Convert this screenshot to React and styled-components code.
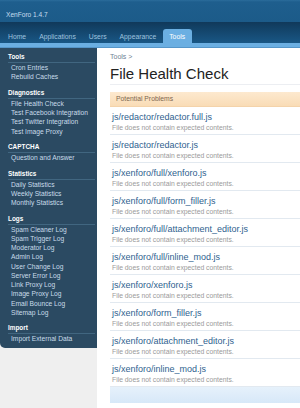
import React from "react";
import styled, { createGlobalStyle } from "styled-components";

const GlobalStyle = createGlobalStyle`
  html, body {
    margin: 0;
    padding: 0;
    background: #efefef;
    font-family: "Liberation Sans", Arial, sans-serif;
  }
  #root {
    min-height: 100vh;
  }
`;

const tabs = ["Home", "Applications", "Users", "Appearance", "Tools"];

const menu = [
  { title: "Tools", items: ["Cron Entries", "Rebuild Caches"] },
  {
    title: "Diagnostics",
    items: [
      "File Health Check",
      "Test Facebook Integration",
      "Test Twitter Integration",
      "Test Image Proxy",
    ],
  },
  { title: "CAPTCHA", items: ["Question and Answer"] },
  {
    title: "Statistics",
    items: ["Daily Statistics", "Weekly Statistics", "Monthly Statistics"],
  },
  {
    title: "Logs",
    items: [
      "Spam Cleaner Log",
      "Spam Trigger Log",
      "Moderator Log",
      "Admin Log",
      "User Change Log",
      "Server Error Log",
      "Link Proxy Log",
      "Image Proxy Log",
      "Email Bounce Log",
      "Sitemap Log",
    ],
  },
  { title: "Import", items: ["Import External Data"] },
];

const problems = [
  "js/redactor/redactor.full.js",
  "js/redactor/redactor.js",
  "js/xenforo/full/xenforo.js",
  "js/xenforo/full/form_filler.js",
  "js/xenforo/full/attachment_editor.js",
  "js/xenforo/full/inline_mod.js",
  "js/xenforo/xenforo.js",
  "js/xenforo/form_filler.js",
  "js/xenforo/attachment_editor.js",
  "js/xenforo/inline_mod.js",
];

export default function App() {
  return (
    <>
      <GlobalStyle />
      <Page>
        <Header>
          <TopBar>
            <Brand>XenForo 1.4.7</Brand>
          </TopBar>
          <TabBar>
            {tabs.map((t) => (
              <Tab key={t} $active={t === "Tools"}>
                {t}
              </Tab>
            ))}
          </TabBar>
          <TabStrip />
        </Header>

        <Body>
          <Sidebar>
            {menu.map((section) => (
              <Section key={section.title}>
                <SectionTitle>{section.title}</SectionTitle>
                {section.items.map((item) => (
                  <MenuItem key={item}>{item}</MenuItem>
                ))}
              </Section>
            ))}
          </Sidebar>

          <Main>
            <Crumb>Tools &gt;</Crumb>
            <Title>File Health Check</Title>
            <ProblemHead>Potential Problems</ProblemHead>
            {problems.map((p) => (
              <Problem key={p}>
                <FilePath>{p}</FilePath>
                <FileNote>File does not contain expected contents.</FileNote>
              </Problem>
            ))}
            <ListFooter />
          </Main>
        </Body>
      </Page>
    </>
  );
}

const Page = styled.div`
  display: flex;
  flex-direction: column;
  min-height: 100vh;
`;

const Header = styled.div`
  display: flex;
  flex-direction: column;
`;

const TopBar = styled.div`
  height: 22px;
  box-sizing: border-box;
  display: flex;
  align-items: flex-end;
  padding: 0 0 2px 6px;
  background: linear-gradient(#2b6c9b 0, #1e5e8d 2px, #1c5b89 100%);
`;

const Brand = styled.div`
  font-size: 6.6px;
  line-height: 10px;
  color: #c6ddef;
`;

const TabBar = styled.div`
  height: 21px;
  display: flex;
  align-items: flex-end;
  padding-left: 1.5px;
  background: linear-gradient(#10395a, #195785);
`;

const Tab = styled.div`
  height: 14px;
  box-sizing: border-box;
  padding: 2px 6.5px 0;
  line-height: 12px;
  font-size: 6.8px;
  border-radius: 3px 3px 0 0;
  color: ${(p) => (p.$active ? "#ffffff" : "#9fc2df")};
  background: ${(p) => (p.$active ? "#6bafe2" : "transparent")};
`;

const TabStrip = styled.div`
  height: 4px;
  background: #6bafe2;
  border-bottom: 1px solid #5596c9;
`;

const Body = styled.div`
  flex: 1;
  display: flex;
  align-items: stretch;
`;

const Sidebar = styled.div`
  width: 97px;
  flex-shrink: 0;
  align-self: flex-start;
  box-sizing: border-box;
  padding: 4px 0 4px;
  background: #2b4a62;
  border-bottom-left-radius: 5px;
`;

const Section = styled.div`
  & + & {
    margin-top: 6.3px;
  }
`;

const SectionTitle = styled.div`
  margin: 0 2px 0 8px;
  font-size: 6.4px;
  font-weight: bold;
  line-height: 10px;
  color: #ffffff;
  border-bottom: 1px solid #416680;
`;

const MenuItem = styled.div`
  padding-left: 11px;
  font-size: 6.7px;
  line-height: 9.25px;
  color: #c9dcea;
  white-space: nowrap;
`;

const Main = styled.div`
  flex: 1;
  min-width: 0;
  background: #ffffff;
  padding: 4px 0 0 13px;
`;

const Crumb = styled.div`
  font-size: 7px;
  line-height: 10px;
  color: #6f8294;
`;

const Title = styled.h1`
  margin: 2px 0 7px;
  font-size: 15px;
  font-weight: normal;
  line-height: 20px;
  color: #222222;
  border-bottom: 1px solid #eceef2;
  white-space: nowrap;
`;

const ProblemHead = styled.div`
  height: 14px;
  padding-left: 6px;
  font-size: 6.8px;
  line-height: 14px;
  color: #7d6750;
  background: linear-gradient(#fde9cf, #f9dcb6);
  border-bottom: 1px solid #f4d3aa;
`;

const Problem = styled.div`
  padding: 3px 0 2px 2px;
  border-bottom: 1px solid #e2e9f0;
`;

const FilePath = styled.div`
  font-size: 9px;
  line-height: 14px;
  color: #2f5f8f;
  white-space: nowrap;
`;

const FileNote = styled.div`
  font-size: 6.8px;
  line-height: 8px;
  color: #9a9a9a;
  white-space: nowrap;
`;

const ListFooter = styled.div`
  height: 16px;
  background: linear-gradient(#e6f1fb, #d7e8f8);
`;
